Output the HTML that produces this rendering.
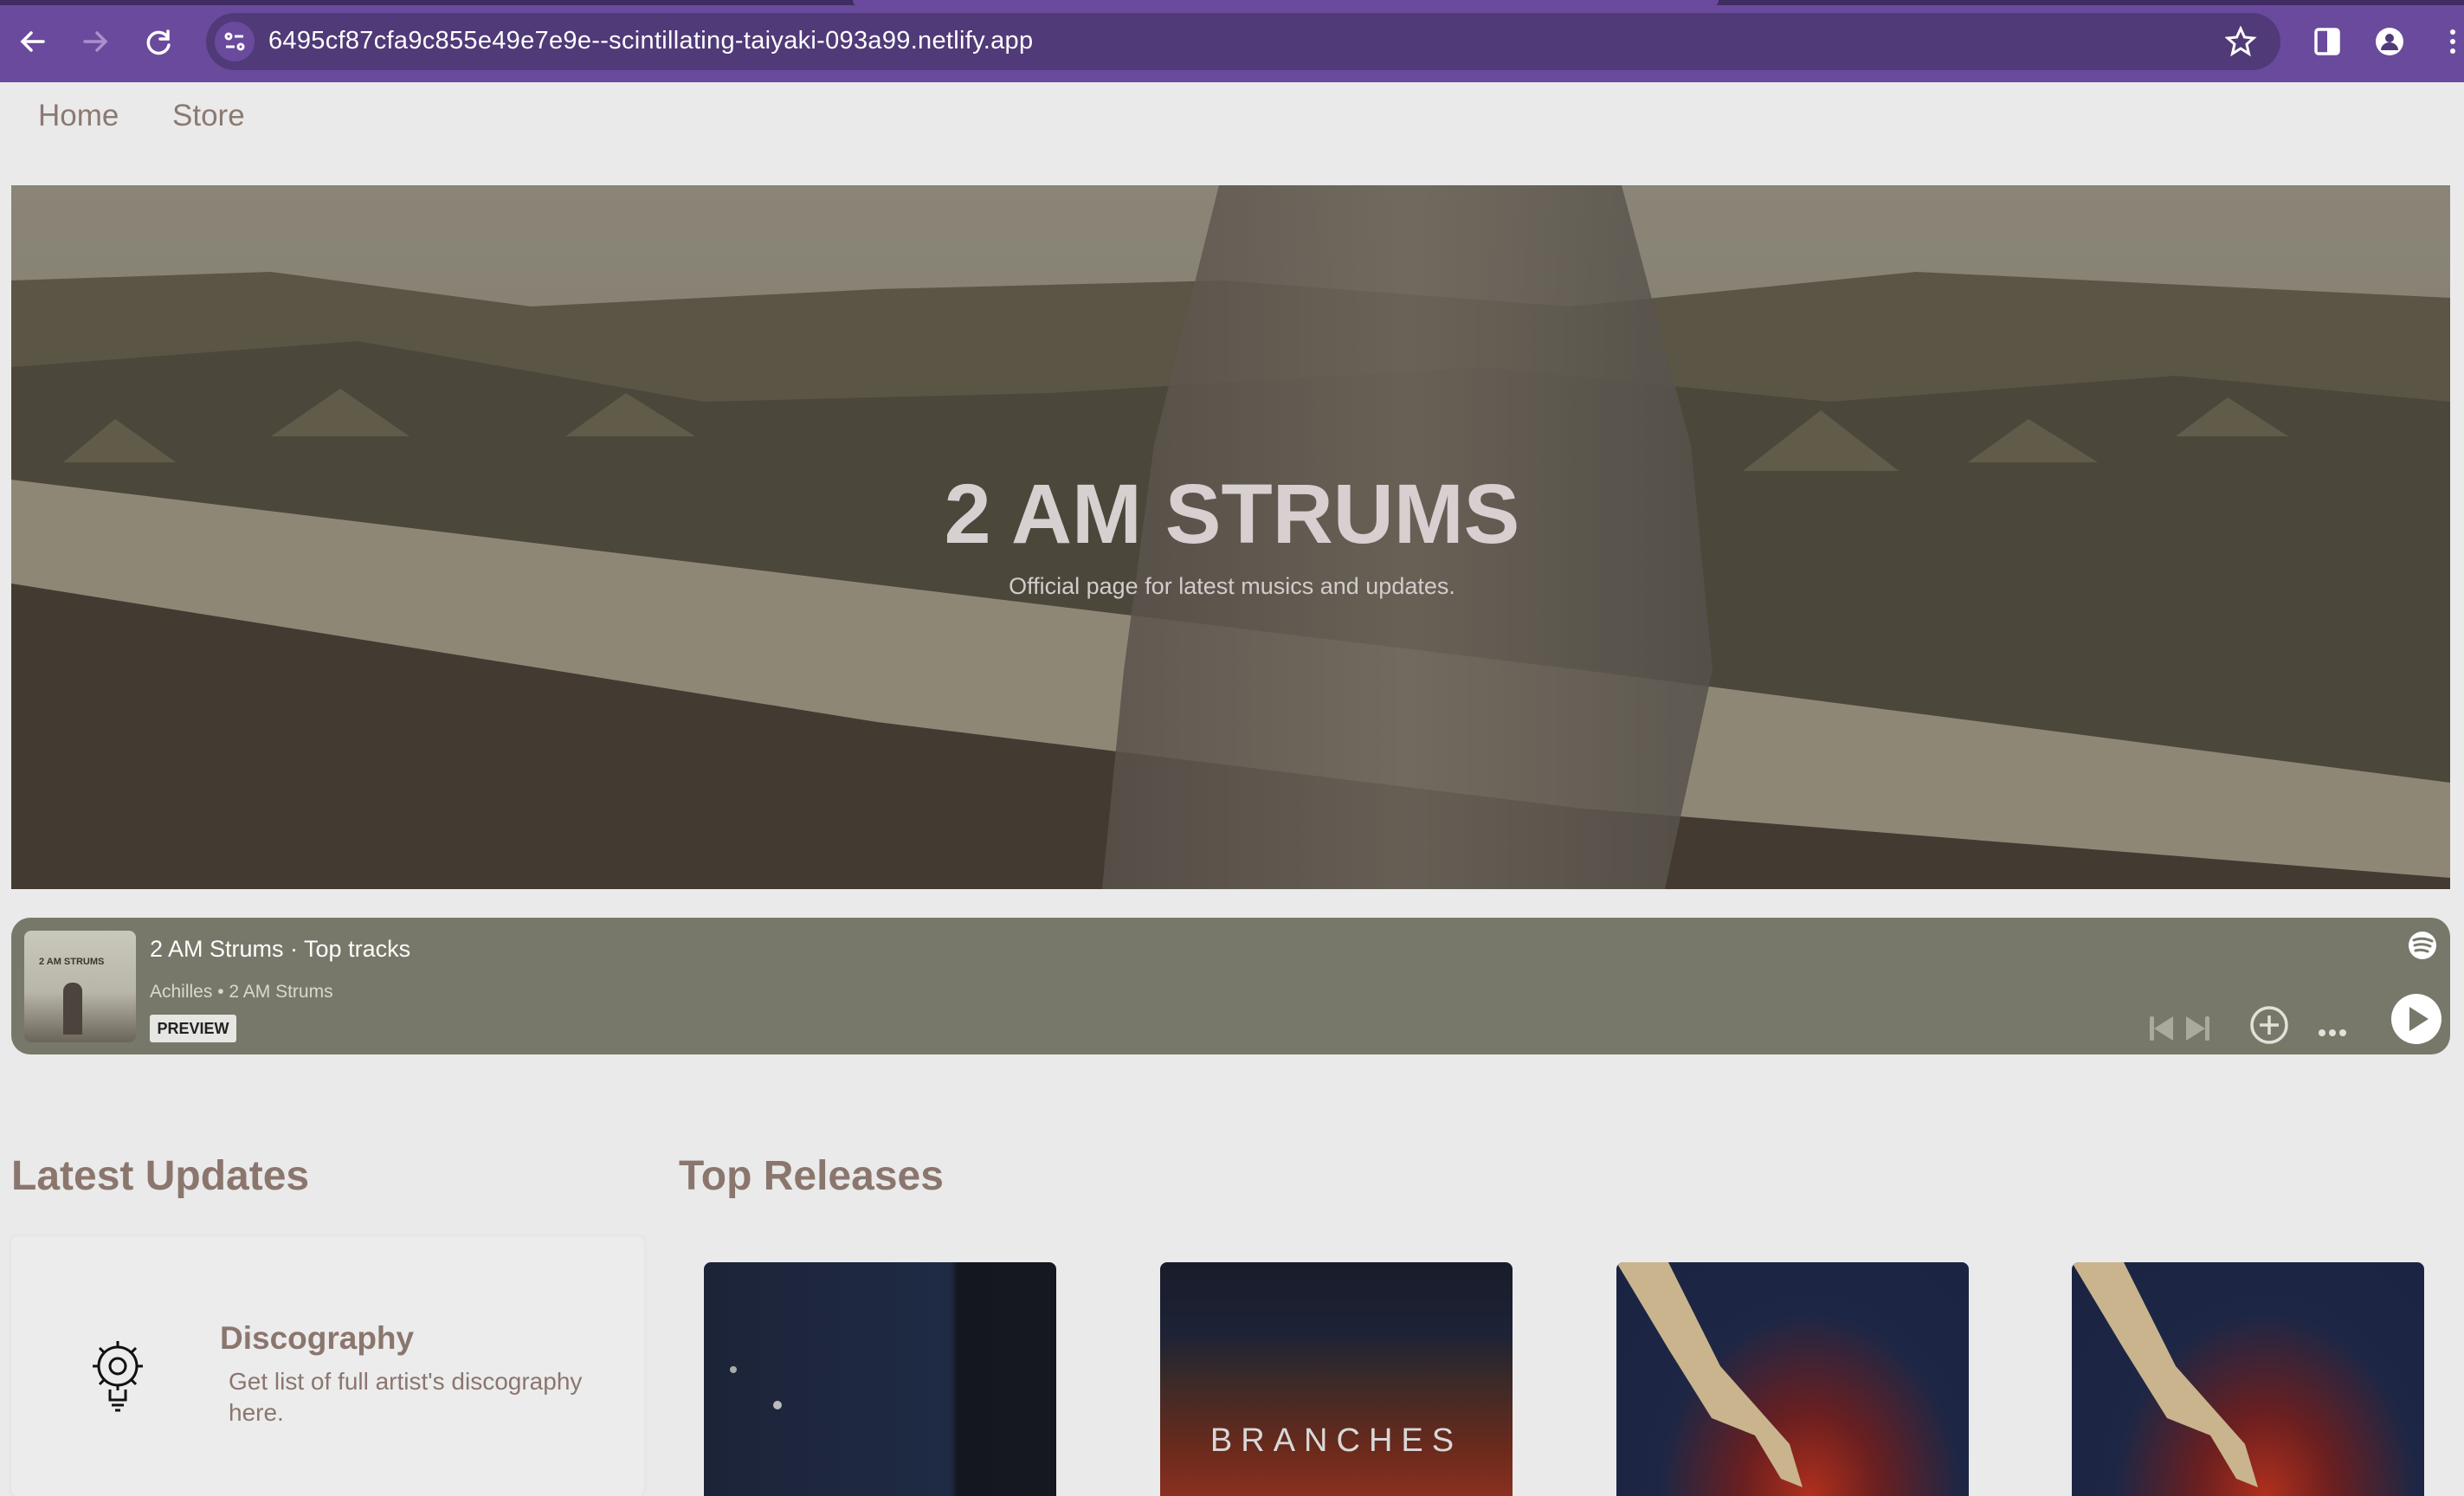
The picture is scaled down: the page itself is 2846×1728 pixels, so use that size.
<!DOCTYPE html>
<html><head><meta charset="utf-8"><style>
*{margin:0;padding:0;box-sizing:border-box}
body{width:2846px;height:1714px;overflow:hidden;background:#eaeaea;font-family:"Liberation Sans",Arial,sans-serif;position:relative}
.chrome{position:absolute;left:0;top:0;width:2846px;height:95px;background:#6a4a9c}
.url{position:absolute;left:238px;top:15px;width:2396px;height:66px;border-radius:33px;background:#503a78}
.urltxt{position:absolute;left:310px;top:31px;color:#fff;font-size:29px;letter-spacing:0.3px}
.nav{position:absolute;top:114px;font-size:35px;color:#8b7a72}
.hero{position:absolute;left:13px;top:214px;width:2817px;height:813px;overflow:hidden}
.title{position:absolute;left:0;width:2846px;top:538px;text-align:center;font-weight:bold;font-size:97px;color:#d7cfd0}
.sub{position:absolute;left:0;width:2846px;top:662px;text-align:center;font-size:27px;color:#d4cccc}
.player{position:absolute;left:13px;top:1060px;width:2817px;height:158px;border-radius:22px;background:#78786a}
h2{position:absolute;font-size:48px;color:#8b766e;font-weight:bold}
.card{position:absolute;left:13px;top:1428px;width:731px;height:300px;background:#ececec;border-radius:8px;box-shadow:0 0 6px rgba(0,0,0,0.06)}
.alb{position:absolute;top:1458px;width:407px;height:270px;border-radius:8px 8px 0 0;overflow:hidden}
</style></head><body>
<div class="chrome">
  <div style="position:absolute;left:0;top:0;width:2846px;height:6px;background:#3f2c62"></div>
  <div style="position:absolute;left:985px;top:0;width:1000px;height:8px;background:#6a4a9c;border-radius:0 0 10px 10px"></div>
  <svg style="position:absolute;left:20px;top:30px" width="180" height="36" viewBox="0 0 180 36" fill="none" stroke-width="3.5" stroke-linecap="round">
    <path d="M30 18H6M16 8L6 18l10 10" stroke="#fff"/>
    <path d="M78 18h24M92 8l10 10-10 10" stroke="#a98fd0"/>
    <path d="M174 14a12 12 0 1 0 1 8M174 6v9h-9" stroke="#fff"/>
  </svg>
  <div class="url"></div>
  <div style="position:absolute;left:248px;top:25px;width:46px;height:46px;border-radius:23px;background:#6a4a9c"></div>
  <svg style="position:absolute;left:257px;top:34px" width="28" height="28" viewBox="0 0 28 28" fill="none" stroke="#fff" stroke-width="3"><circle cx="7" cy="8" r="3"/><path d="M14 8h10M4 20h10"/><circle cx="21" cy="20" r="3"/></svg>
  <div class="urltxt">6495cf87cfa9c855e49e7e9e--scintillating-taiyaki-093a99.netlify.app</div>
  <svg style="position:absolute;left:2570px;top:30px" width="276" height="36" viewBox="0 0 276 36">
    <path d="M18 3l4.5 10 10.5 1-8 7 2.5 11-9.5-6-9.5 6 2.5-11-8-7 10.5-1z" fill="none" stroke="#fff" stroke-width="3"/>
    <rect x="105" y="4" width="26" height="28" rx="3" fill="none" stroke="#fff" stroke-width="3.5"/><rect x="118" y="4" width="13" height="28" fill="#fff"/>
    <circle cx="190" cy="18" r="16" fill="#fff"/><circle cx="190" cy="14" r="5" fill="#503a78"/><path d="M180 28a10 9 0 0 1 20 0z" fill="#503a78"/>
    <circle cx="263" cy="7" r="3" fill="#fff"/><circle cx="263" cy="18" r="3" fill="#fff"/><circle cx="263" cy="29" r="3" fill="#fff"/>
  </svg>
</div>
<div class="nav" style="left:44px">Home</div>
<div class="nav" style="left:199px">Store</div>

<div class="hero">
<svg width="2817" height="813" viewBox="0 0 2817 813" preserveAspectRatio="none">
  <defs>
    <linearGradient id="sky" x1="0" y1="0" x2="0" y2="1"><stop offset="0" stop-color="#8a8577"/><stop offset="1" stop-color="#7b7567"/></linearGradient>
    <linearGradient id="man" x1="0" y1="0" x2="1" y2="0"><stop offset="0" stop-color="#58514a"/><stop offset="0.5" stop-color="#6c655a"/><stop offset="1" stop-color="#55504a"/></linearGradient>
  </defs>
  <rect width="2817" height="813" fill="url(#sky)"/>
  <path d="M0 110 L300 100 L600 140 L1000 120 L1400 110 L1800 140 L2200 100 L2817 130 L2817 813 L0 813Z" fill="#5a5545"/>
  <path d="M0 210 L400 180 L800 250 L1200 240 L1700 210 L2100 250 L2500 220 L2817 250 L2817 813 L0 813Z" fill="#4c473b"/>
  <g fill="#67624f" opacity="0.8">
    <path d="M60 320l60-50 70 50z"/><path d="M300 290l80-55 80 55z"/><path d="M640 290l70-50 80 50z"/><path d="M2000 330l90-70 90 70z"/><path d="M2260 320l70-50 80 50z"/><path d="M2500 290l60-45 70 45z"/>
  </g>
  <path d="M0 340 L1815 560 L2817 690 L2817 813 L0 813Z" fill="#8f8776"/>
  <path d="M0 460 L1000 620 L1815 720 L2817 800 L2817 813 L0 813Z" fill="#433a32"/>
  <path d="M1395 0 L1860 0 L1940 300 L1965 560 L1910 813 L1260 813 L1285 560 L1320 300Z" fill="url(#man)" opacity="0.85"/>
</svg>
</div>
<div class="title">2 AM STRUMS</div>
<div class="sub">Official page for latest musics and updates.</div>

<div class="player">
  <div style="position:absolute;left:15px;top:15px;width:129px;height:129px;border-radius:8px;background:linear-gradient(#c9c8bc 0,#b8b6a8 55%,#6a6459 100%)"></div>
  <div style="position:absolute;left:32px;top:45px;font-size:11px;font-weight:bold;color:#3a362f">2 AM STRUMS</div>
  <div style="position:absolute;left:60px;top:75px;width:22px;height:60px;background:#4a443c;border-radius:10px 10px 0 0"></div>
  <div style="position:absolute;left:160px;top:21px;font-size:27px;color:#fff">2 AM Strums · Top tracks</div>
  <div style="position:absolute;left:160px;top:74px;font-size:21px;color:#d8d8cf">Achilles • 2 AM Strums</div>
  <div style="position:absolute;left:160px;top:112px;width:100px;height:32px;background:#e6e6e2;border-radius:3px;font-size:18px;font-weight:bold;color:#222;text-align:center;line-height:32px">PREVIEW</div>
  <svg style="position:absolute;left:2450px;top:10px" width="367" height="140" viewBox="0 0 367 140">
    <circle cx="335" cy="22" r="16" fill="#fff"/>
    <path d="M325 16q10-4 21 1M326 22q9-3 18 1M327 28q7-2 14 1" stroke="#78786a" stroke-width="3" fill="none" stroke-linecap="round"/>
    <rect x="20" y="104" width="5" height="28" rx="2" fill="#a9a99e"/><path d="M25 118l22-14v28z" fill="#a9a99e"/>
    <rect x="84" y="104" width="5" height="28" rx="2" fill="#a9a99e"/><path d="M84 118l-22-14v28z" fill="#a9a99e"/>
    <circle cx="158" cy="114" r="20" fill="none" stroke="#e2e2da" stroke-width="3.5"/><path d="M158 103v22M147 114h22" stroke="#e2e2da" stroke-width="3.5"/>
    <circle cx="219" cy="123" r="4" fill="#e2e2da"/><circle cx="231" cy="123" r="4" fill="#e2e2da"/><circle cx="243" cy="123" r="4" fill="#e2e2da"/>
    <circle cx="328" cy="107" r="29" fill="#fff"/><path d="M320 93l22 14-22 14z" fill="#78786a"/>
  </svg>
</div>

<h2 style="left:13px;top:1331px">Latest Updates</h2>
<h2 style="left:784px;top:1331px">Top Releases</h2>

<div class="card">
  <svg style="position:absolute;left:78px;top:115px" width="90" height="90" viewBox="0 0 90 90" fill="none" stroke="#111" stroke-width="3">
    <circle cx="45" cy="35" r="22"/><circle cx="45" cy="35" r="9"/>
    <path d="M45 6v7M45 57v6M16 35h7M67 35h7M24 14l5 5M61 51l5 5M66 14l-5 5M29 51l-5 5"/>
    <path d="M36 62v12h18V62M38 80h14M42 86h6"/>
  </svg>
  <div style="position:absolute;left:241px;top:97px;font-size:37px;font-weight:bold;color:#8b766e">Discography</div>
  <div style="position:absolute;left:251px;top:150px;font-size:28px;line-height:36px;color:#8b766e;width:440px">Get list of full artist's discography here.</div>
</div>

<div class="alb" style="left:813px;background:linear-gradient(90deg,#1c2438 0,#1f2a44 70%,#141720 72%,#161820 100%)">
  <div style="position:absolute;left:30px;top:120px;width:8px;height:8px;border-radius:4px;background:#aaa"></div>
  <div style="position:absolute;left:80px;top:160px;width:10px;height:10px;border-radius:5px;background:#bbb"></div>
</div>
<div class="alb" style="left:1340px;background:linear-gradient(180deg,#181c2a 0,#1d2236 30%,#3a2a28 50%,#6b2a1c 80%,#8a3020 100%)">
  <div style="position:absolute;left:0;width:407px;top:185px;text-align:center;font-size:38px;letter-spacing:10px;color:#d8d8d8">BRANCHES</div>
</div>
<div class="alb" style="left:1867px;background:radial-gradient(ellipse at 55% 100%,#b0301c 0,#6a1f20 25%,#1d2745 55%,#1a2442 100%)">
  <svg width="407" height="270" viewBox="0 0 407 270"><path d="M0 0 L60 0 L120 120 L200 210 L215 260 L190 250 L160 200 L110 180 L60 100Z" fill="#c9b48e"/></svg>
</div>
<div class="alb" style="left:2393px;background:radial-gradient(ellipse at 55% 100%,#b0301c 0,#6a1f20 25%,#1d2745 55%,#1a2442 100%)">
  <svg width="407" height="270" viewBox="0 0 407 270"><path d="M0 0 L60 0 L120 120 L200 210 L215 260 L190 250 L160 200 L110 180 L60 100Z" fill="#c9b48e"/></svg>
</div>
</body></html>
